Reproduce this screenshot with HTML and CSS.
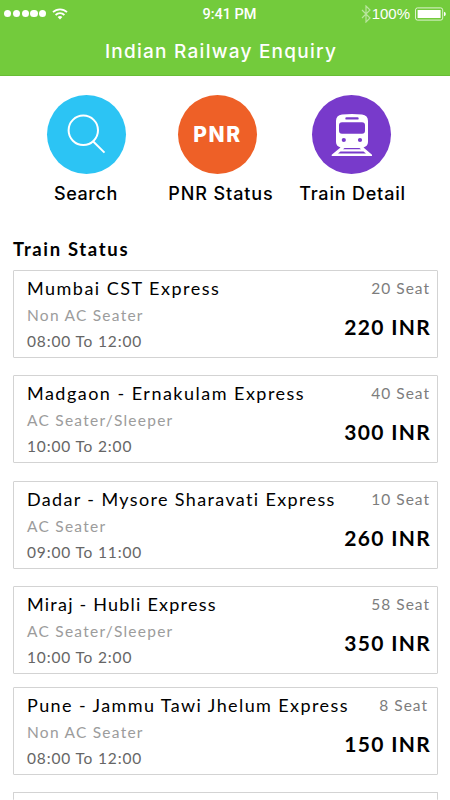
FILE: index.html
```html
<!DOCTYPE html>
<html lang="en">
<head>
    <meta charset="UTF-8">
    <meta name="viewport" content="width=device-width, initial-scale=1.0">
    <title>Indian Railway Enquiry</title>
    <link rel="stylesheet" href="styles.css">
</head>
<body>
    <header class="header">
        <div class="status-bar">
            <div class="signal">
                <span class="dot"></span><span class="dot"></span><span class="dot"></span><span class="dot"></span><span class="dot"></span>
                <svg class="wifi" width="16" height="12" viewBox="0 0 16 12" fill="none" stroke="#fff" stroke-width="1.8">
                    <path d="M1 4.2a10 10 0 0 1 14 0"/>
                    <path d="M3.6 7a6.3 6.3 0 0 1 8.8 0"/>
                    <path d="M5.6 9a3.6 3.6 0 0 1 4.8 0L8 11.5z" fill="#fff" stroke="none"/>
                </svg>
            </div>
            <div class="clock">9:41 PM</div>
            <div class="battery">
                <svg width="10" height="18" viewBox="0 0 10 18" fill="none" stroke="#fff" stroke-width="1.2" opacity="0.5">
                    <path d="M1 5l8 8-4 4V1l4 4-8 8"/>
                </svg>
                <span class="percent">100%</span>
                <svg class="cell" width="31" height="14" viewBox="0 0 31 14">
                    <rect x="0.5" y="0.9" width="27.2" height="12.2" rx="2" fill="none" stroke="#fff" stroke-opacity="0.75"/>
                    <rect x="2.6" y="3" width="23" height="8" fill="#fff"/>
                    <path d="M29 4.7q1.8.6 1.8 2.3T29 9.3z" fill="#fff"/>
                </svg>
            </div>
        </div>
        <h1 class="title">Indian Railway Enquiry</h1>
    </header>

    <nav class="menu">
        <a class="menu-item">
            <span class="circle search">
                <svg width="79" height="79" viewBox="0 0 79 79" fill="none" stroke="#fff" stroke-width="2">
                    <circle cx="36.3" cy="35.3" r="14.7"/>
                    <path d="M46 46.3l11.5 11.3"/>
                </svg>
            </span>
            <span class="label">Search</span>
        </a>
        <a class="menu-item">
            <span class="circle pnr">PNR</span>
            <span class="label label-pnr">PNR Status</span>
        </a>
        <a class="menu-item">
            <span class="circle train">
                <svg width="79" height="79" viewBox="0 0 79 79" fill="#fff">
                    <path fill-rule="evenodd" d="M30 19.6Q40 18.2 50 19.6Q56 20.6 56 26V47Q56 51 51.5 52.5L60 59.7V61H19.7V59.7L28.5 52.5Q24 51 24 47V26Q24 20.6 30 19.6Z
                        M34.5 22.2a1 1 0 0 0 0 2.4h11a1 1 0 0 0 0-2.4z
                        M30 27.3q-3 0-3 3v5.4q0 3 3 3h20q3 0 3-3v-5.4q0-3-3-3z
                        M31.8 42.9a2.1 2.1 0 1 0 0 4.2a2.1 2.1 0 1 0 0-4.2z
                        M48 42.9a2.1 2.1 0 1 0 0 4.2a2.1 2.1 0 1 0 0-4.2z
                        M32.5 52.9l-1.5 1.3h18l-1.5-1.3z
                        M28.5 56.4l-2.5 2h28l-2.5-2z"/>
                </svg>
            </span>
            <span class="label label-train">Train Detail</span>
        </a>
    </nav>

    <main class="trains">
        <h2 class="heading">Train Status</h2>
        <div class="card">
            <div class="info">
                <div class="name">Mumbai CST Express</div>
                <div class="type">Non AC Seater</div>
                <div class="time">08:00 To 12:00</div>
            </div>
            <div class="fare">
                <div class="seat">20 Seat</div>
                <div class="price">220 INR</div>
            </div>
        </div>
        <div class="card">
            <div class="info">
                <div class="name">Madgaon - Ernakulam Express</div>
                <div class="type">AC Seater/Sleeper</div>
                <div class="time">10:00 To 2:00</div>
            </div>
            <div class="fare">
                <div class="seat">40 Seat</div>
                <div class="price">300 INR</div>
            </div>
        </div>
        <div class="card">
            <div class="info">
                <div class="name">Dadar - Mysore Sharavati Express</div>
                <div class="type">AC Seater</div>
                <div class="time">09:00 To 11:00</div>
            </div>
            <div class="fare">
                <div class="seat">10 Seat</div>
                <div class="price">260 INR</div>
            </div>
        </div>
        <div class="card">
            <div class="info">
                <div class="name">Miraj - Hubli Express</div>
                <div class="type">AC Seater/Sleeper</div>
                <div class="time">10:00 To 2:00</div>
            </div>
            <div class="fare">
                <div class="seat">58 Seat</div>
                <div class="price">350 INR</div>
            </div>
        </div>
        <div class="card">
            <div class="info">
                <div class="name">Pune - Jammu Tawi Jhelum Express</div>
                <div class="type">Non AC Seater</div>
                <div class="time">08:00 To 12:00</div>
            </div>
            <div class="fare">
                <div class="seat">8 Seat</div>
                <div class="price">150 INR</div>
            </div>
        </div>
        <div class="card card-next"></div>
    </main>
</body>
</html>
```
FILE: styles.css
```css
* {
    box-sizing: border-box;
}

body {
    margin: 0;
    height: 800px;
    overflow: hidden;
    background-color: #fff;
    color: #000;
    font-family: 'Lato', sans-serif;
}

.header {
    height: 76px;
    background-color: #73cb3c;
    border-bottom: 1px solid #68bd35;
    color: #fff;
}

.status-bar {
    display: grid;
    grid-template-columns: 1fr auto 1fr;
    align-items: center;
    height: 26px;
    padding: 1px 4px 0;
    font-family: 'Roboto', sans-serif;
}

.signal {
    display: flex;
    align-items: center;
    gap: 1.5px;
}

.dot {
    width: 7.3px;
    height: 7.3px;
    border-radius: 50%;
    background-color: #fff;
}

.wifi {
    margin-left: 4px;
}

.clock {
    padding: 1px 0 0 9px;
    font-size: 14.5px;
    font-weight: 500;
}

.battery {
    display: flex;
    justify-content: flex-end;
    align-items: center;
}

.percent {
    font-family: 'Liberation Sans', sans-serif;
    font-size: 15px;
    margin: 0 5px 0 1px;
}

.title {
    margin: 0;
    padding: 1px 8px 0 0;
    text-align: center;
    font-family: 'Inter', sans-serif;
    font-size: 19px;
    font-weight: 500;
    line-height: 50px;
    letter-spacing: 1.25px;
}

.menu {
    display: grid;
    grid-template-columns: 132px 131px 137px;
    height: 136px;
    padding: 19px 0 0 20px;
}

.menu-item {
    display: flex;
    flex-direction: column;
    align-items: center;
}

.circle {
    display: flex;
    justify-content: center;
    align-items: center;
    width: 79px;
    height: 79px;
    border-radius: 50%;
}

.search {
    background-color: #2cc4f4;
}

.pnr {
    background-color: #ee6027;
    color: #fff;
    font-family: 'Inter', sans-serif;
    font-size: 21px;
    font-weight: 800;
    letter-spacing: 1.6px;
}

.train {
    background-color: #783acb;
}

.label {
    padding-top: 1px;
    font-family: 'Inter', sans-serif;
    font-size: 18px;
    font-weight: 500;
    line-height: 38px;
    letter-spacing: 0.6px;
    white-space: nowrap;
}

.label-pnr {
    padding-left: 7px;
    letter-spacing: 0.9px;
}

.label-train {
    padding-left: 2px;
    letter-spacing: 0.8px;
}

.trains {
    padding: 24px 12px 0 13px;
}

.heading {
    margin: 0;
    font-size: 18.5px;
    font-weight: 700;
    line-height: 27px;
    height: 34px;
    letter-spacing: 1.65px;
}

.card {
    display: flex;
    justify-content: space-between;
    height: 88px;
    margin-bottom: 17px;
    padding: 4px 6px 0 13px;
    border: 1px solid #d3d3d3;
    border-radius: 1px;
    white-space: nowrap;
}

.card:nth-of-type(2) {
    margin-bottom: 18px;
}

.card:nth-of-type(4) {
    margin-bottom: 13px;
}

.card-next {
    height: 8px;
    margin-bottom: 0;
    border-bottom: none;
}

/* long names may run on above the price */
.info {
    width: 300px;
}

.name {
    font-size: 18px;
    line-height: 27px;
    letter-spacing: 1.48px;
}

.card:nth-of-type(3) .name {
    letter-spacing: 1.36px;
}

.card:nth-of-type(4) .name {
    letter-spacing: 1.22px;
}

.card:nth-of-type(5) .name {
    letter-spacing: 1.4px;
}

.type {
    color: #9c9c9c;
    font-size: 15.5px;
    line-height: 26px;
    letter-spacing: 1.25px;
}

.time {
    color: #666;
    font-size: 15.5px;
    line-height: 26px;
    letter-spacing: 0.85px;
}

.fare {
    text-align: right;
}

.seat {
    padding-right: 1px;
    color: #7d7d7d;
    font-size: 15.5px;
    line-height: 26px;
    letter-spacing: 1px;
}

.card:nth-of-type(5) .seat {
    padding-right: 3px;
}

.price {
    margin-top: 11px;
    font-size: 21px;
    font-weight: 700;
    line-height: 30px;
    letter-spacing: 1.3px;
}
```
